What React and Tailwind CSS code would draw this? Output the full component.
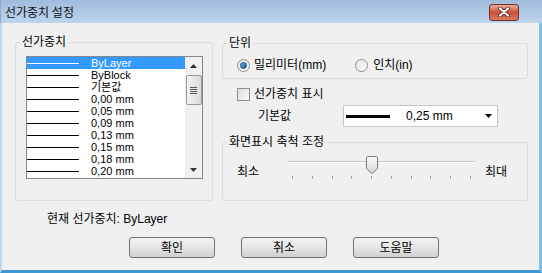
import React from 'react';

const rows = ['ByLayer', 'ByBlock', '기본값', '0,00 mm', '0,05 mm', '0,09 mm', '0,13 mm', '0,15 mm', '0,18 mm', '0,20 mm'];

const Radio = ({ checked }) => (
    <span className="w-[13px] h-[13px] rounded-full border border-[#8e8f8f] bg-gradient-to-br from-[#e6e6e6] to-[#fafafa] flex items-center justify-center shrink-0">
        {checked && <span className="w-[7px] h-[7px] rounded-full bg-gradient-to-br from-[#6ab6ec] to-[#0a59a6] border border-[#1b4e82]"></span>}
    </span>
);

const Button = ({ children }) => (
    <button className="w-[86px] h-[21px] border border-[#707070] rounded-[3px] bg-gradient-to-b from-[#f2f2f2] via-[#e6e6e6] to-[#cfcfcf] text-[12px] leading-none">
        {children}
    </button>
);

const App = () => {
    return (
        <div className="w-[542px] h-[273px] flex flex-col bg-[#f0f0f0] text-[12px] text-black font-['Liberation_Sans','Noto_Sans_CJK_KR',sans-serif] overflow-hidden">
            {/* title bar */}
            <div className="h-[23px] shrink-0 flex items-center justify-between pl-[4px] pr-[23px] bg-gradient-to-b from-[#a0bcdc] to-[#bdd4ec] border-l border-[#8aa9cc]">
                <span className="text-[12px] leading-none font-['Noto_Sans_CJK_KR',sans-serif] text-[#111]">선가중치 설정</span>
                <div className="w-[30px] h-[17px] mt-[1px] rounded-[3px] border border-[#7a2f24] bg-gradient-to-b from-[#e9a99b] via-[#c9503c] to-[#d77a63] flex items-center justify-center">
                    <svg width="14" height="10" viewBox="0 0 14 10">
                        <path d="M3 1.5 L11 8.5 M11 1.5 L3 8.5" stroke="#5a2a22" strokeWidth="4" strokeLinecap="round" />
                        <path d="M3 1.5 L11 8.5 M11 1.5 L3 8.5" stroke="#ffffff" strokeWidth="2.2" strokeLinecap="round" />
                    </svg>
                </div>
            </div>

            {/* client area */}
            <div className="flex-1 flex flex-col border-l-2 border-r-[3px] border-b-[3px] border-l-[#c2d7ec] border-r-[#7fc2e8] border-b-[#3f98cf]">
                <div className="flex items-start pl-[13px] mt-[12px]">
                    {/* 선가중치 group */}
                    <fieldset className="w-[198px] h-[166px] border border-[#d5dfe5] rounded-[3px]">
                        <legend className="ml-[4px] px-[2px] leading-[14px]">선가중치</legend>
                        <div className="ml-[10px] mt-[7px] w-[177px] h-[123px] border border-[#828790] bg-white flex">
                            <div className="flex-1 flex flex-col">
                                {rows.map((r, i) => (
                                    <div key={r} className={`h-[12px] flex items-center ${i === 0 ? 'bg-[#3399ff] text-white' : ''}`}>
                                        <span className={`w-[52px] h-px ${i === 0 ? 'bg-white' : 'bg-black'}`}></span>
                                        <span className="ml-[12px] text-[11px] leading-[12px]">{r}</span>
                                    </div>
                                ))}
                            </div>
                            <div className="w-[17px] bg-[#f0f0f0] flex flex-col items-center">
                                <div className="h-[17px] flex items-center justify-center">
                                    <svg width="7" height="4" viewBox="0 0 7 4"><path d="M3.5 0 L7 4 L0 4 Z" fill="#333" /></svg>
                                </div>
                                <div className="w-[16px] h-[30px] mt-[1px] rounded-[2px] border border-[#9a9a9a] bg-gradient-to-r from-[#f4f4f4] to-[#dadada] flex flex-col items-center justify-center gap-[1px]">
                                    <span className="w-[7px] h-px bg-[#555]"></span>
                                    <span className="w-[7px] h-px bg-[#555]"></span>
                                    <span className="w-[7px] h-px bg-[#555]"></span>
                                    <span className="w-[7px] h-px bg-[#555]"></span>
                                </div>
                                <div className="flex-1"></div>
                                <div className="h-[17px] flex items-center justify-center">
                                    <svg width="7" height="4" viewBox="0 0 7 4"><path d="M0 0 L7 0 L3.5 4 Z" fill="#333" /></svg>
                                </div>
                            </div>
                        </div>
                    </fieldset>

                    {/* right column */}
                    <div className="ml-[9px] mt-[1px] w-[306px] flex flex-col">
                        <fieldset className="h-[43px] border border-[#d5dfe5] rounded-[3px]">
                            <legend className="ml-[4px] px-[2px] leading-[14px]">단위</legend>
                            <div className="flex items-center h-[16px] mt-[7px] pl-[14px]">
                                <Radio checked />
                                <span className="ml-[4px]">밀리미터(mm)</span>
                                <span className="ml-[29px]"><Radio /></span>
                                <span className="ml-[5px]">인치(in)</span>
                            </div>
                        </fieldset>

                        <div className="flex items-center h-[16px] mt-[7px] pl-[15px]">
                            <span className="w-[13px] h-[13px] border border-[#8f8f8f] bg-gradient-to-br from-[#dcdcdc] to-[#fbfbfb]"></span>
                            <span className="ml-[4px]">선가중치 표시</span>
                        </div>

                        <div className="flex items-center mt-[3px] pl-[36px]">
                            <span className="w-[85px]">기본값</span>
                            <div className="w-[155px] h-[22px] border border-[#c5c5c5] bg-white flex items-center pl-[2px] pr-[5px]">
                                <span className="w-[44px] h-[3px] bg-black"></span>
                                <span className="ml-[16px] flex-1">0,25 mm</span>
                                <svg width="7" height="4" viewBox="0 0 7 4"><path d="M0 0 L7 0 L3.5 4 Z" fill="#000" /></svg>
                            </div>
                        </div>

                        <fieldset className="h-[66px] mt-[8px] border border-[#d5dfe5] rounded-[3px]">
                            <legend className="ml-[4px] px-[2px] leading-[14px]">화면표시 축척 조정</legend>
                            <div className="flex items-start mt-[6px] pl-[14px]">
                                <span className="mt-[10px] leading-[14px] w-[50px]">최소</span>
                                <div className="relative w-[188px] h-[26px]">
                                    <div className="mt-[6px] h-[2px] bg-[#c8c8c8] border-b border-white"></div>
                                    <div className="absolute left-[79px] top-[1px] w-[12px] h-[18px]">
                                        <svg width="12" height="18" viewBox="0 0 12 18">
                                            <defs>
                                                <linearGradient id="th" x1="0" y1="0" x2="0" y2="1">
                                                    <stop offset="0" stopColor="#fbfbfb" />
                                                    <stop offset="1" stopColor="#d6d6d6" />
                                                </linearGradient>
                                            </defs>
                                            <path d="M1.5 0.5 H10.5 Q11.5 0.5 11.5 1.5 V12.5 L6 17.5 L0.5 12.5 V1.5 Q0.5 0.5 1.5 0.5 Z" fill="url(#th)" stroke="#7a7a7a" />
                                        </svg>
                                    </div>
                                    <div className="mt-[13px] ml-[5px] w-[179px] flex justify-between">
                                        {Array.from({ length: 10 }).map((_, i) => (
                                            <span key={i} className="w-px h-[3px] bg-[#a0a0a0]"></span>
                                        ))}
                                    </div>
                                </div>
                                <span className="mt-[10px] leading-[14px] ml-[10px]">최대</span>
                            </div>
                        </fieldset>
                    </div>
                </div>

                <div className="pl-[45px] mt-[11px] leading-[14px]">현재 선가중치: ByLayer</div>

                <div className="flex gap-[26px] pl-[127px] mt-[11px]">
                    <Button>확인</Button>
                    <Button>취소</Button>
                    <Button>도움말</Button>
                </div>
            </div>
        </div>
    );
};

export default App;
